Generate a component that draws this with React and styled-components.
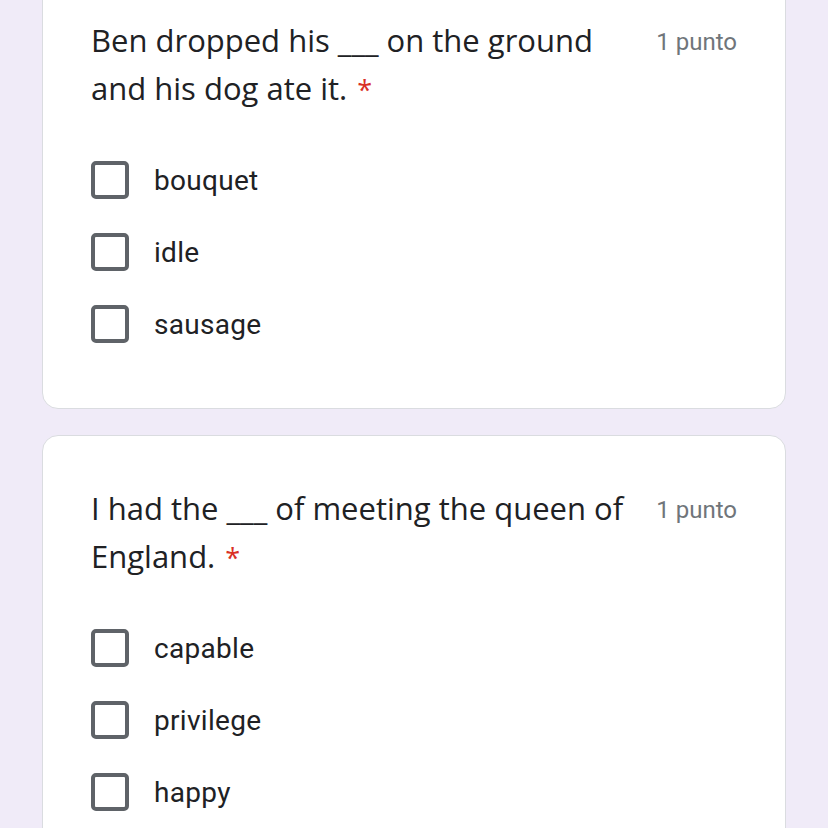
import React from "react";
import styled, { createGlobalStyle } from "styled-components";

const GlobalStyle = createGlobalStyle`
  html, body {
    margin: 0;
    padding: 0;
    background: #f0ebf8;
    overflow: hidden;
  }
`;

const Page = styled.main`
  width: 828px;
  height: 828px;
  overflow: hidden;
  background: #f0ebf8;
`;

const List = styled.div`
  display: flex;
  flex-direction: column;
  gap: 26px;
  padding: 0 42px;
  margin-top: -33px;
`;

const Card = styled.section`
  background: #fff;
  border: 1px solid #dadce0;
  border-radius: 16px;
  padding: 48px;
`;

const Header = styled.div`
  display: flex;
  align-items: flex-start;
`;

const Title = styled.div`
  flex: 1;
  font-family: "Open Sans", "Roboto", sans-serif;
  font-size: 31px;
  line-height: 48px;
  color: #202124;
`;

const Required = styled.span`
  color: #d93025;
  margin-left: 10px;
  font-size: 27px;
  line-height: 1;
`;

const Points = styled.div`
  padding-left: 24px;
  padding-top: 4px;
  font-family: "Roboto", sans-serif;
  font-weight: 400;
  font-size: 24px;
  line-height: 44px;
  color: #70757a;
  white-space: nowrap;
`;

const Options = styled.div`
  margin-top: 32px;
  display: flex;
  flex-direction: column;
`;

const Option = styled.label`
  display: flex;
  align-items: center;
  height: 72px;
  gap: 25px;
  font-family: "Roboto", sans-serif;
  font-weight: 400;
  font-size: 28px;
  letter-spacing: 0.3px;
  color: #202124;
  cursor: pointer;
`;

const Box = styled.span`
  box-sizing: border-box;
  width: 38px;
  height: 38px;
  border: 4px solid #5f6368;
  border-radius: 5px;
  flex-shrink: 0;
`;

const questions = [
  {
    title: "Ben dropped his ___ on the ground and his dog ate it.",
    options: ["bouquet", "idle", "sausage"],
  },
  {
    title: "I had the ___ of meeting the queen of England.",
    options: ["capable", "privilege", "happy"],
  },
];

function Question({ title, options }) {
  return (
    <Card>
      <Header>
        <Title>
          {title}
          <Required>*</Required>
        </Title>
        <Points>1 punto</Points>
      </Header>
      <Options>
        {options.map((o) => (
          <Option key={o}>
            <Box />
            {o}
          </Option>
        ))}
      </Options>
    </Card>
  );
}

export default function App() {
  return (
    <>
      <GlobalStyle />
      <Page>
        <List>
          {questions.map((q) => (
            <Question key={q.title} {...q} />
          ))}
        </List>
      </Page>
    </>
  );
}
